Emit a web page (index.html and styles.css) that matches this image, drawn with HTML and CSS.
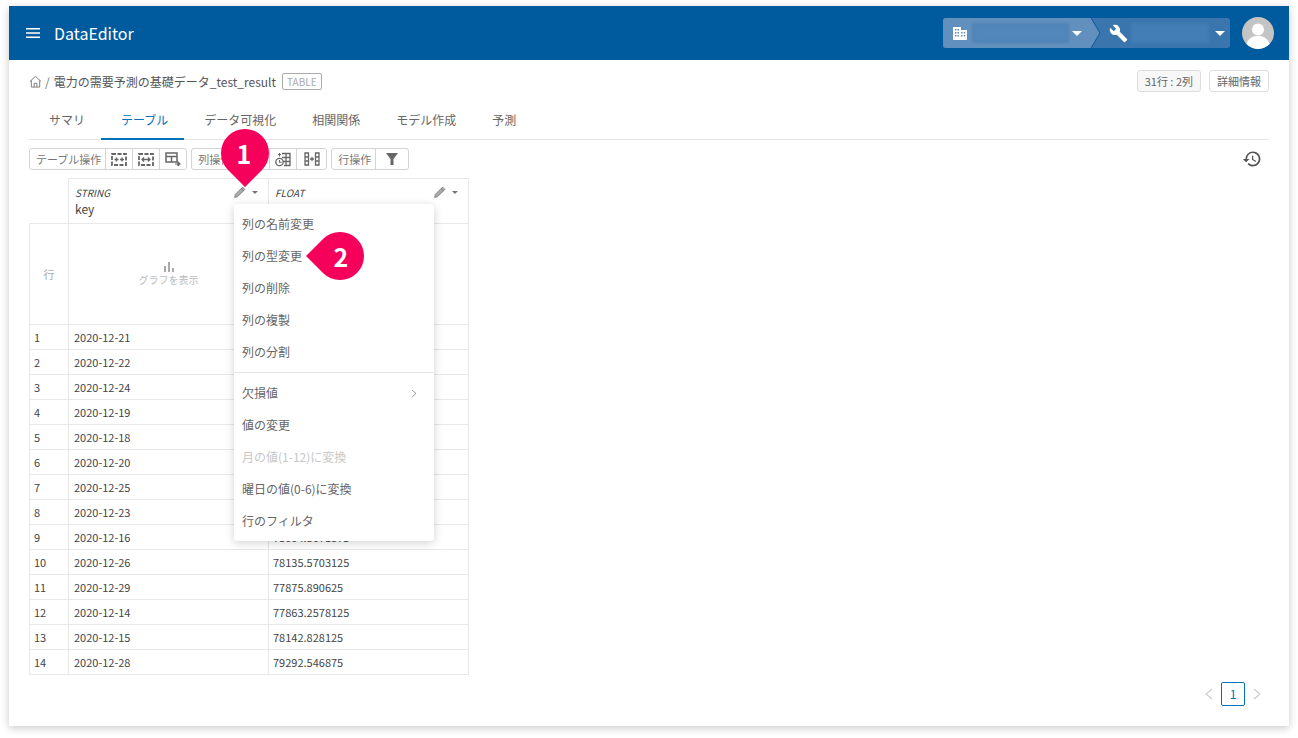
FILE: index.html
```html
<!DOCTYPE html>
<html lang="ja">
<head>
<meta charset="utf-8">
<title>DataEditor</title>
<link rel="stylesheet" href="styles.css">
</head>
<body>
<div class="card">
  <header class="topbar">
    <svg class="menu-icon" viewBox="0 0 14 10" width="14" height="10"><path d="M0 0h14v1.400H0zM0 4.300h14v1.400H0zM0 8.600h14V10H0z" fill="#fff"/></svg>
    <span class="brand">DataEditor</span>
    <div class="crumbs">
      <div class="crumb crumb-org">
        <svg width="14" height="13" viewBox="0 0 14 13"><path fill="#fff" fill-rule="evenodd" d="M0 0h8v3h6v10H0zM2 2v1.500h1.500V2zM4.500 2v1.500H6V2zM2 5v1.500h1.500V5zM4.500 5v1.500H6V5zM8 5v1.500h1.500V5zM10.700 5v1.500h1.500V5zM2 8v1.500h1.500V8zM4.500 8v1.500H6V8zM8 8v1.500h1.500V8zM10.700 8v1.500h1.500V8z"/></svg>
        <span class="blur blur-a"></span>
        <span class="caret"></span>
      </div>
      <svg class="chevron" width="10" height="30" viewBox="0 0 10 30"><path d="M0 0l9 15-9 15z" fill="#6290be"/><path d="M0 0l9 15-9 15" fill="none" stroke="#0d5a9d" stroke-width="1"/></svg>
      <div class="crumb crumb-tool">
        <svg width="19" height="19" viewBox="0 0 24 24"><path fill="#fff" d="M22.700 19l-9.100-9.100c.9-2.300.4-5-1.500-6.900-2-2-5-2.400-7.400-1.300L9 6 6 9 1.600 4.700C.4 7.100.9 10.100 2.900 12.100c1.900 1.900 4.600 2.400 6.900 1.500l9.100 9.100c.4.400 1 .4 1.400 0l2.300-2.300c.5-.4.5-1.100.1-1.400z"/></svg>
        <span class="blur blur-b"></span>
        <span class="caret"></span>
      </div>
    </div>
    <div class="avatar">
      <svg width="32" height="32" viewBox="0 0 32 32"><circle cx="16" cy="16" r="16" fill="#c4c4c4"/><circle cx="16" cy="12.500" r="6" fill="#fff"/><path d="M4.500 27c1.500-5.500 6-8 11.500-8s10 2.500 11.500 8a16 16 0 0 1-23 0z" fill="#fff"/></svg>
    </div>
  </header>

  <main class="content">
    <div class="pathbar">
      <svg class="home" width="13" height="13" viewBox="0 0 14 14"><path d="M1 7l6-5.500L13 7M2.500 5.800V13h9V5.800M5.500 13V9h3v4" fill="none" stroke="#777" stroke-width="1"/></svg>
      <span class="slash">/</span>
      <span class="dataset">電力の需要予測の基礎データ_test_result</span>
      <span class="tag">TABLE</span>
      <div class="path-right">
        <span class="pill pill-grey">31行 : 2列</span>
        <span class="pill">詳細情報</span>
      </div>
    </div>

    <nav class="tabs">
      <a class="tab">サマリ</a>
      <a class="tab active">テーブル</a>
      <a class="tab">データ可視化</a>
      <a class="tab">相関関係</a>
      <a class="tab">モデル作成</a>
      <a class="tab">予測</a>
    </nav>

    <div class="toolbar">
      <div class="group">
        <span class="g-label">テーブル操作</span>
        <span class="g-btn"><svg width="16" height="13" viewBox="0 0 16 13"><path d="M1 1h14v11H1z" fill="none" stroke="#666" stroke-width="1.800" stroke-dasharray="4 1.500"/><path d="M5.500 4.500v4M3.500 6.500h4M11 4.500v4M9 6.500h4" stroke="#666" stroke-width="1.400"/></svg></span>
        <span class="g-btn"><svg width="16" height="13" viewBox="0 0 16 13"><path d="M1 1h14v11H1z" fill="none" stroke="#666" stroke-width="1.800" stroke-dasharray="4 1.500"/><path d="M4 6.500h8M6 4.500l-2 2 2 2M10 4.500l2 2-2 2" fill="none" stroke="#666" stroke-width="1.300"/></svg></span>
        <span class="g-btn"><svg width="16" height="14" viewBox="0 0 16 14"><path d="M1 1h11v9H1zM1 4.500h11M6.500 4.500V10" fill="none" stroke="#666" stroke-width="1.500"/><path d="M10 12h4M13 10l2 2-2 2z" fill="none" stroke="#666" stroke-width="1.200"/></svg></span>
      </div>
      <div class="group">
        <span class="g-label">列操作</span>
        <span class="g-btn g-hidden"></span>
        <span class="g-btn"><svg width="16" height="15" viewBox="0 0 16 15"><path d="M7 1.500h8v12H9M7 5.500h8M8 9.500h7M11 1.500v12" fill="none" stroke="#666" stroke-width="1.300"/><circle cx="4.500" cy="10" r="3.700" fill="none" stroke="#666" stroke-width="1.300"/><path d="M4.500 1v3.500M3 2.500h3M4.500 8v2.300h2" fill="none" stroke="#666" stroke-width="1.100"/></svg></span>
        <span class="g-btn g-mid"><svg width="16" height="14" viewBox="0 0 16 14"><path d="M1 1h3.500v12H1zM11.500 1H15v12h-3.500zM1 5h3.500M1 9h3.500M11.500 5H15M11.500 9H15M6 7h4M8 5v4" fill="none" stroke="#666" stroke-width="1.300"/></svg></span>
      </div>
      <div class="group">
        <span class="g-label">行操作</span>
        <span class="g-btn g-wide"><svg width="12" height="12" viewBox="0 0 12 12"><path d="M0 0h12L7.500 6v6h-3V6z" fill="#666"/></svg></span>
      </div>
      <svg class="history" width="20" height="20" viewBox="0 0 24 24"><path fill="#555" d="M13 3a9 9 0 0 0-9 9H1l3.900 3.900.1.100L9 12H6a7 7 0 1 1 2.100 4.900l-1.400 1.400A9 9 0 1 0 13 3zm-1 5v5l4.300 2.500.7-1.200-3.500-2.100V8z"/></svg>
    </div>

    <table class="grid">
      <colgroup><col class="c-no"><col class="c-data"><col class="c-data"></colgroup>
      <thead>
        <tr class="head-row">
          <th class="blank"></th>
          <th><div class="h-inner"><em>STRING</em><b>key</b><span class="h-tools"><svg width="12" height="12" viewBox="0 0 12 12"><path d="M.6 11.400l.7-3L8.600 1.100l2.300 2.300-7.300 7.300zM7.200 2.500l2.300 2.300" fill="#aaa" stroke="#777" stroke-width=".8"/></svg><i class="mini-caret"></i></span></div></th>
          <th><div class="h-inner"><em>FLOAT</em><b>&nbsp;</b><span class="h-tools"><svg width="12" height="12" viewBox="0 0 12 12"><path d="M.6 11.400l.7-3L8.600 1.100l2.300 2.300-7.300 7.300zM7.200 2.500l2.300 2.300" fill="#aaa" stroke="#777" stroke-width=".8"/></svg><i class="mini-caret"></i></span></div></th>
        </tr>
        <tr class="chart-row">
          <th class="row-label">行</th>
          <th class="chart-cell"><svg width="10" height="10" viewBox="0 0 10 10"><path d="M0 4h2v6H0zM4 0h2v10H4zM8 6h2v4H8z" fill="#aaa"/></svg><span>グラフを表示</span></th>
          <th></th>
        </tr>
      </thead>
      <tbody>
        <tr><td>1</td><td>2020-12-21</td><td>78004.8671875</td></tr>
        <tr><td>2</td><td>2020-12-22</td><td>78004.8671875</td></tr>
        <tr><td>3</td><td>2020-12-24</td><td>78004.8671875</td></tr>
        <tr><td>4</td><td>2020-12-19</td><td>78004.8671875</td></tr>
        <tr><td>5</td><td>2020-12-18</td><td>78004.8671875</td></tr>
        <tr><td>6</td><td>2020-12-20</td><td>78004.8671875</td></tr>
        <tr><td>7</td><td>2020-12-25</td><td>78004.8671875</td></tr>
        <tr><td>8</td><td>2020-12-23</td><td>78004.8671875</td></tr>
        <tr><td>9</td><td>2020-12-16</td><td>78004.8671875</td></tr>
        <tr><td>10</td><td>2020-12-26</td><td>78135.5703125</td></tr>
        <tr><td>11</td><td>2020-12-29</td><td>77875.890625</td></tr>
        <tr><td>12</td><td>2020-12-14</td><td>77863.2578125</td></tr>
        <tr><td>13</td><td>2020-12-15</td><td>78142.828125</td></tr>
        <tr><td>14</td><td>2020-12-28</td><td>79292.546875</td></tr>
      </tbody>
    </table>

    <div class="pager">
      <svg width="9" height="12" viewBox="0 0 9 12"><path d="M8 1L2 6l6 5" fill="none" stroke="#ccc" stroke-width="1.200"/></svg>
      <span class="page">1</span>
      <svg width="9" height="12" viewBox="0 0 9 12"><path d="M1 1l6 5-6 5" fill="none" stroke="#ccc" stroke-width="1.200"/></svg>
    </div>

    <ul class="menu">
      <li>列の名前変更</li>
      <li>列の型変更</li>
      <li>列の削除</li>
      <li>列の複製</li>
      <li>列の分割</li>
      <li class="divider"></li>
      <li class="has-sub">欠損値<svg width="6" height="9" viewBox="0 0 6 9"><path d="M1 1l4 3.500L1 8" fill="none" stroke="#999"/></svg></li>
      <li>値の変更</li>
      <li class="disabled">月の値(1-12)に変換</li>
      <li>曜日の値(0-6)に変換</li>
      <li>行のフィルタ</li>
    </ul>

    <span class="marker marker-1"><span class="marker-num">1</span></span>
    <span class="marker marker-2"><span class="marker-num">2</span></span>
  </main>
</div>
</body>
</html>
```
FILE: styles.css
```css
* { box-sizing: border-box; }
html, body { margin: 0; height: 100%; }
body {
  background: #fff;
  font-family: "Noto Sans CJK JP", "Noto Sans", sans-serif;
  font-size: 11px;
  color: #555;
  overflow: hidden;
}
.card {
  margin: 6px 9px 0;
  width: 1280px;
  height: 720px;
  background: #fff;
  box-shadow: 0 2px 8px rgba(0,0,0,.22);
}
.topbar {
  height: 54px;
  background: #005a9e;
  display: flex;
  align-items: center;
  padding: 0 15px 0 17px;
  color: #fff;
}
.menu-icon { flex: none; }
.brand { margin-left: 14px; font-size: 16px; line-height: 20px; }
.crumbs {
  margin-left: auto;
  display: flex;
  align-items: center;
  height: 30px;
  width: 287px;
  background: #3a75ae;
  border-radius: 3px;
}
.crumb { display: flex; align-items: center; height: 30px; }
.crumb-org {
  width: 148px;
  padding-left: 10px;
  background: #6290be;
  border-radius: 3px 0 0 3px;
}
.crumb-tool { flex: 1; padding-left: 8px; }
.chevron { flex: none; }
.blur { display: block; height: 20px; filter: blur(1.500px); }
.blur-a { width: 97px; margin-left: 5px; background: #5287ba; box-shadow: inset 0 0 0 3px #4d83b6; }
.blur-b { width: 78px; margin-left: 3px; background: #447eb6; }
.crumb-org .caret { margin-left: 3px; }
.crumb-tool .caret { margin-left: 6px; }
.caret {
  width: 0; height: 0;
  border-left: 5px solid transparent;
  border-right: 5px solid transparent;
  border-top: 5px solid #fff;
}
.avatar { margin-left: 12px; width: 32px; height: 32px; }
.avatar svg { display: block; }

.content { position: relative; padding: 10px 20px 0; height: 666px; }
.pathbar { display: flex; align-items: center; height: 22px; }
.home { flex: none; }
.slash { margin: 0 4px 0 3px; color: #777; font-size: 12px; }
.dataset { font-size: 12px; color: #555; }
.tag {
  margin-left: 6px;
  border: 1px solid #aaa;
  border-radius: 2px;
  color: #aaa;
  font-size: 10px;
  line-height: 15px;
  padding: 0 4px;
  height: 17px;
}
.path-right { margin-left: auto; display: flex; gap: 8px; }
.pill {
  border: 1px solid #ddd;
  border-radius: 3px;
  height: 22px;
  line-height: 20px;
  padding: 0 7px;
  font-size: 11px;
  color: #666;
}
.pill-grey { background: #f7f7f7; }

.tabs {
  display: flex;
  margin-top: 8px;
  height: 40px;
  border-bottom: 1px solid #e4e4e4;
}
.tab {
  padding: 0 16px 0 20px;
  font-size: 12px;
  line-height: 40px;
  color: #666;
  height: 40px;
}
.tab.active { color: #0071ba; border-bottom: 2px solid #0071ba; }

.toolbar { display: flex; align-items: center; gap: 4px; margin-top: 8px; height: 22px; }
.group {
  display: flex;
  height: 22px;
  border: 1px solid #d4d4d4;
  border-radius: 3px;
  align-items: center;
}
.g-label { padding: 0 4px 0 6px; font-size: 11px; line-height: 20px; color: #777; }
.g-btn {
  width: 27px;
  height: 20px;
  border-left: 1px solid #d4d4d4;
  display: flex;
  align-items: center;
  justify-content: center;
}
.g-wide { width: 33px; }
.g-hidden { width: 34px; }
.g-mid { width: 30px; }
.history { margin-left: auto; margin-right: 7px; }

.grid {
  margin-top: 8px;
  border-collapse: collapse;
  table-layout: fixed;
  width: 439px;
  font-size: 11px;
}
.c-no { width: 39px; }
.c-data { width: 200px; }
.grid th, .grid td { border: 1px solid #e8e8e8; padding: 0; font-weight: 400; }
.blank { border-top-color: transparent !important; border-left-color: transparent !important; }
.head-row { height: 45px; }
.h-inner {
  position: relative;
  height: 44px;
  padding: 7px 6px 0 6px;
  text-align: left;
  display: flex;
  flex-direction: column;
}
.h-inner em { font-size: 10px; line-height: 14px; font-style: italic; color: #444; }
.h-inner b { font-weight: 400; font-size: 12px; line-height: 18px; color: #444; }
.h-tools { position: absolute; top: 7px; right: 10px; display: flex; align-items: center; gap: 6px; }
.mini-caret {
  width: 0; height: 0;
  border-left: 3px solid transparent;
  border-right: 3px solid transparent;
  border-top: 3px solid #777;
}
.chart-row { height: 101px; }
.row-label { color: #aaa; font-size: 11px; }
.chart-cell { text-align: center; color: #bbb; font-size: 10px; }
.chart-cell svg { display: block; margin: 0 auto 1px; }
.chart-cell span { display: block; line-height: 14px; }
.grid tbody tr { height: 25px; }
.grid td { padding-left: 5px; color: #444; line-height: 14px; }
.grid td:first-child { padding-left: 4px; }
.grid td:last-child { padding-left: 4px; }

.pager {
  position: absolute;
  right: 27px;
  top: 622px;
  display: flex;
  align-items: center;
  gap: 8px;
}
.page {
  width: 24px;
  height: 24px;
  border: 1px solid #0071ba;
  border-radius: 2px;
  color: #0071ba;
  text-align: center;
  line-height: 22px;
  font-size: 12px;
}

.menu {
  position: absolute;
  left: 225px;
  top: 144px;
  width: 200px;
  margin: 0;
  padding: 4px 0;
  list-style: none;
  background: #fff;
  border-radius: 3px;
  box-shadow: 0 2px 10px rgba(0,0,0,.18);
}
.menu li {
  height: 32px;
  line-height: 32px;
  padding: 0 8px;
  font-size: 12px;
  color: #666;
}
.menu .divider { height: 1px; padding: 0; margin: 4px 0; background: #e4e4e4; }
.menu .has-sub { display: flex; align-items: center; justify-content: space-between; padding-right: 17px; }
.menu .disabled { color: #c8c8c8; }

.marker {
  position: absolute;
  width: 48px;
  height: 48px;
  color: #fff;
  font-weight: 700;
  font-size: 25px;
  display: flex;
  align-items: center;
  justify-content: center;
  line-height: 1;
}
.marker::before {
  content: "";
  position: absolute;
  inset: 0;
  background: #f5005a;
  transform: rotate(45deg);
}
.marker-num { position: relative; }
.marker-1 { left: 212px; top: 69px; padding-right: 2px; }
.marker-1::before { border-radius: 50% 50% 0 50%; }
.marker-2 { left: 307px; top: 172px; padding-left: 2px; }
.marker-2::before { border-radius: 50% 50% 50% 0; }
```
